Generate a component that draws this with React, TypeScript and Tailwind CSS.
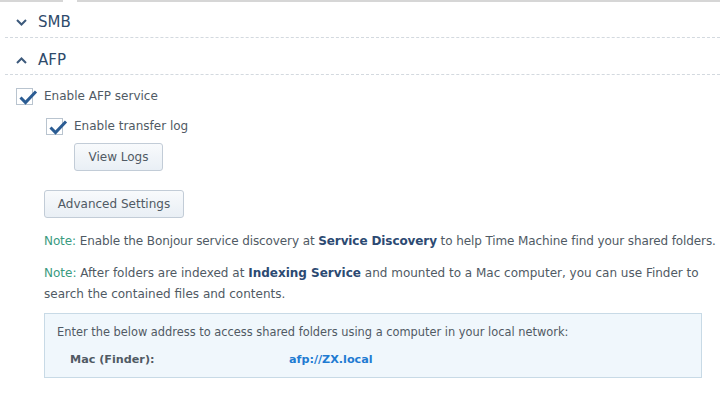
import React from "react";

function Chevron({ up }: { up?: boolean }) {
  return (
    <svg width="11" height="7" viewBox="0 0 11 7" className="text-[#3d5a7c]">
      <path
        d={up ? "M1 6 L5.5 1.5 L10 6" : "M1 1 L5.5 5.5 L10 1"}
        fill="none"
        stroke="currentColor"
        strokeWidth="2"
      />
    </svg>
  );
}

function Checkbox({ label }: { label: string }) {
  return (
    <div className="flex h-[20px] items-center">
      <span className="relative h-[17px] w-[17px] shrink-0 border border-[#b9c4cf] bg-white">
        <svg
          width="22"
          height="18"
          viewBox="0 0 22 18"
          className="absolute left-[1px] top-[0px]"
        >
          <path
            d="M2.5 8.5 L7.5 13.5 L18 2.5"
            fill="none"
            stroke="#2b5c93"
            strokeWidth="3"
          />
        </svg>
      </span>
      <span className="ml-[11px] text-[12px] text-[#505a64]">{label}</span>
    </div>
  );
}

function Btn({ children, className = "" }: { children: React.ReactNode; className?: string }) {
  return (
    <button
      className={`h-[28px] rounded-[3px] border border-[#c2ccd7] bg-gradient-to-b from-[#f8fafc] to-[#e9eff5] text-[12px] text-[#505a64] ${className}`}
    >
      {children}
    </button>
  );
}

export default function App() {
  return (
    <div className="h-[397px] w-[720px] overflow-hidden bg-white font-['DejaVu_Sans',sans-serif]">
      {/* top edge */}
      <div className="flex h-[3px]">
        <div className="h-[2px] w-[63px] bg-[#d6d6d6]" />
        <div className="h-[2px] w-[14px]" />
        <div className="h-[2px] flex-1 bg-[#d6d6d6]" />
      </div>

      {/* SMB */}
      <div className="ml-[5px] flex h-[35px] items-center border-b border-dashed border-[#d3d9df] pl-[11px] pt-[4px]">
        <Chevron />
        <span className="ml-[11px] text-[15px] text-[#2f4b6b]">SMB</span>
      </div>

      {/* AFP */}
      <div className="ml-[5px] flex h-[37px] items-center border-b border-dashed border-[#d3d9df] pl-[11px] pt-[8px]">
        <Chevron up />
        <span className="ml-[11px] text-[15px] text-[#2f4b6b]">AFP</span>
      </div>

      <div className="pl-[16px]">
        <div className="mt-[11px]">
          <Checkbox label="Enable AFP service" />
        </div>
        <div className="ml-[30px] mt-[10px]">
          <Checkbox label="Enable transfer log" />
        </div>
        <div className="ml-[58px] mt-[7px]">
          <Btn className="w-[89px]">View Logs</Btn>
        </div>
        <div className="ml-[28px] mt-[19px]">
          <Btn className="w-[140px]">Advanced Settings</Btn>
        </div>

        <div className="ml-[28px] mt-[13px] text-[12px] leading-[21px] text-[#505a64]">
          <p className="whitespace-nowrap tracking-[-0.1px]">
            <span className="text-[#3a9b80]">Note:</span> Enable the Bonjour service discovery at{" "}
            <b className="text-[#2c4a72]">Service Discovery</b> to help Time Machine find your shared folders.
          </p>
          <div className="mt-[11px] whitespace-nowrap">
            <p>
              <span className="text-[#3a9b80]">Note:</span> After folders are indexed at{" "}
              <b className="text-[#2c4a72]">Indexing Service</b> and mounted to a Mac computer, you can use Finder to
            </p>
            <p>search the contained files and contents.</p>
          </div>

          <div className="mt-[8px] h-[65px] w-[658px] border border-[#c8dae6] bg-[#f0f7fc] pl-[12px] pt-[9px] leading-[18px]">
            <p className="text-[11.4px]">
              Enter the below address to access shared folders using a computer in your local network:
            </p>
            <div className="mt-[10px] flex pl-[13px] text-[11.2px]">
              <b className="w-[219px] shrink-0 text-[#505a64]">Mac (Finder):</b>
              <b className="text-[#1f7bd2]">afp://ZX.local</b>
            </div>
          </div>
        </div>
      </div>
    </div>
  );
}
